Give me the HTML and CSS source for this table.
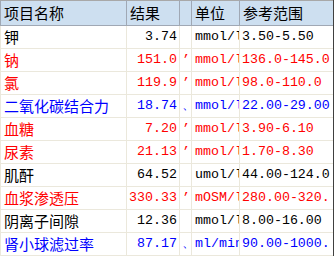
FILE: index.html
```html
<!DOCTYPE html>
<html>
<head>
<meta charset="utf-8">
<link rel="stylesheet" href="styles.css">
</head>
<body>
<div class="frame">
<table class="grid">
<colgroup><col class="c1"><col class="c2"><col class="c3"><col class="c4"><col class="c5"></colgroup>
<thead>
<tr><th>项目名称</th><th>结果</th><th></th><th>单位</th><th>参考范围</th></tr>
</thead>
<tbody>
<tr class="k"><td class="n">钾</td><td class="v">3.74</td><td class="f"></td><td class="u">mmol/l</td><td class="r">3.50-5.50</td></tr>
<tr class="red"><td class="n">钠</td><td class="v">151.0</td><td class="f">’</td><td class="u">mmol/l</td><td class="r">136.0-145.0</td></tr>
<tr class="red"><td class="n">氯</td><td class="v">119.9</td><td class="f">’</td><td class="u">mmol/l</td><td class="r">98.0-110.0</td></tr>
<tr class="blue"><td class="n">二氧化碳结合力</td><td class="v">18.74</td><td class="f">、</td><td class="u">mmol/l</td><td class="r">22.00-29.00</td></tr>
<tr class="red"><td class="n">血糖</td><td class="v">7.20</td><td class="f">’</td><td class="u">mmol/l</td><td class="r">3.90-6.10</td></tr>
<tr class="red"><td class="n">尿素</td><td class="v">21.13</td><td class="f">’</td><td class="u">mmol/l</td><td class="r">1.70-8.30</td></tr>
<tr class="k"><td class="n">肌酐</td><td class="v">64.52</td><td class="f"></td><td class="u">umol/l</td><td class="r">44.00-124.0</td></tr>
<tr class="red"><td class="n">血浆渗透压</td><td class="v">330.33</td><td class="f">’</td><td class="u">mOSM/l</td><td class="r">280.00-320.</td></tr>
<tr class="k"><td class="n">阴离子间隙</td><td class="v">12.36</td><td class="f"></td><td class="u">mmol/l</td><td class="r">8.00-16.00</td></tr>
<tr class="blue"><td class="n">肾小球滤过率</td><td class="v">87.17</td><td class="f">、</td><td class="u">ml/min</td><td class="r">90.00-1000.</td></tr>
</tbody>
</table>
</div>
</body>
</html>
```
FILE: styles.css
```css
html, body {
  margin: 0;
  padding: 0;
  background: #ffffff;
}
.frame {
  width: 334px;
  height: 257px;
  overflow: hidden;
}
.grid {
  border-collapse: collapse;
  table-layout: fixed;
  width: 333px;
  font-family: "Noto Sans CJK SC", sans-serif;
  font-size: 15px;
  border-right: 2px solid #404040;
}
.c1 { width: 126px; }
.c2 { width: 53px; }
.c3 { width: 12px; }
.c4 { width: 48px; }
.c5 { width: 94px; }
th {
  height: 24px;
  padding: 0 0 0 3px;
  background: #cddff0;
  border: 1px solid #a0a8b4;
  border-top-color: #a8a8a8;
  text-align: left;
  font-weight: normal;
  color: #000;
  overflow: hidden;
  white-space: nowrap;
  line-height: 24px;
}
td {
  height: 22px;
  padding: 0 0 0 3px;
  border: 1px solid #ebe8dc;
  white-space: nowrap;
  overflow: hidden;
  line-height: 22px;
}
td.v, td.u, td.r, td.f {
  font-family: "Liberation Mono", monospace;
  font-size: 13.3px;
}
td.v {
  text-align: right;
  padding: 0 2px 0 0;
}
td.f {
  padding: 0 0 0 2px;
}
td.u {
  padding-left: 3px;
  text-overflow: clip;
}
td.r {
  padding-left: 2px;
}
.k td { color: #000000; }
.red td { color: #ff0000; }
.blue td { color: #0000ff; }
```
